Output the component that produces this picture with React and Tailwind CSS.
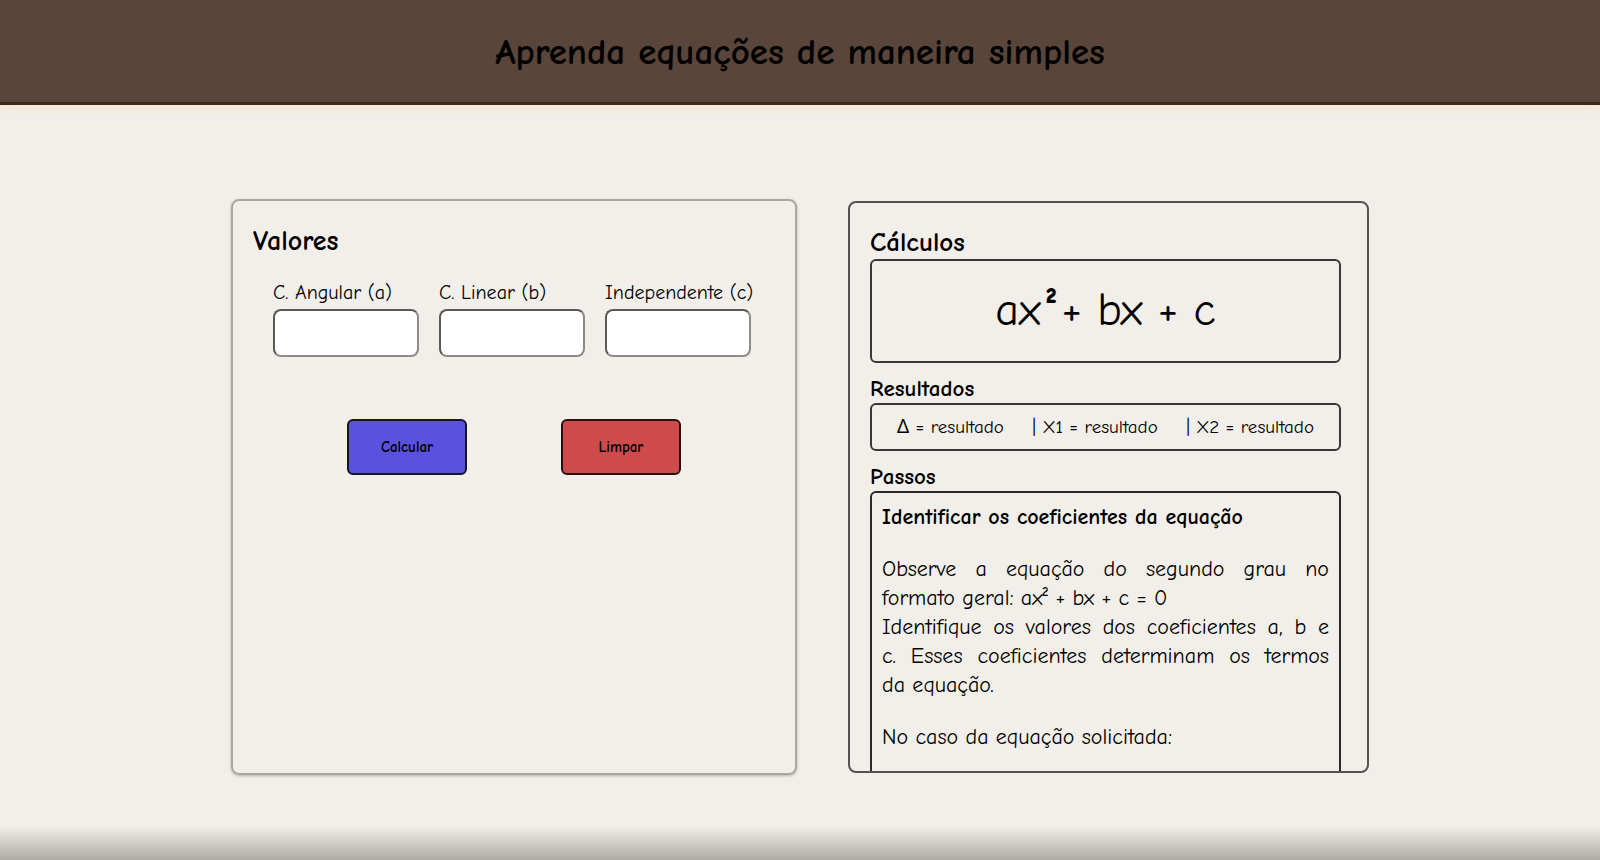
import { useState } from "react";

const FIELDS = [
  { id: "a", label: "C. Angular (a)" },
  { id: "b", label: "C. Linear (b)" },
  { id: "c", label: "Independente (c)" },
];

const EMPTY = { a: "", b: "", c: "" };

function solve({ a, b, c }) {
  const [x, y, z] = [a, b, c].map(Number);
  if (!x) return null;
  const delta = y * y - 4 * x * z;
  if (delta < 0) return { delta, x1: "∄", x2: "∄" };
  const root = Math.sqrt(delta);
  return { delta, x1: (-y + root) / (2 * x), x2: (-y - root) / (2 * x) };
}

function ValuesCard({ onSolve }) {
  const [values, setValues] = useState(EMPTY);
  return (
    <section className="min-w-0 rounded-lg border-2 border-[#aaa7a2] px-5 pt-5 shadow-[0_1px_3px_rgba(0,0,0,0.25)]">
      <h2 className="text-[28px] leading-10 font-bold">Valores</h2>
      <form
        onSubmit={(e) => {
          e.preventDefault();
          onSolve(solve(values));
        }}
      >
        <div className="mt-4 flex gap-5 pr-6 pl-5">
          {FIELDS.map((f) => (
            <div key={f.id} className="flex min-w-0 flex-1 flex-col">
              <label htmlFor={f.id} className="text-[20px] leading-8 whitespace-nowrap">
                {f.label}
              </label>
              <input
                id={f.id}
                type="text"
                value={values[f.id]}
                onChange={(e) => setValues({ ...values, [f.id]: e.target.value })}
                className="h-12 w-full rounded-lg border-2 border-t-[#5b5955] border-r-[#8d8b88] border-b-[#8d8b88] border-l-[#5b5955] bg-white px-3 text-[20px]"
              />
            </div>
          ))}
        </div>
        <div className="mt-[62px] flex justify-center gap-[94px]">
          <button
            type="submit"
            className="h-14 w-[120px] rounded-md border-2 border-[#15132f] bg-[#5852df] text-[15px] font-bold"
          >
            Calcular
          </button>
          <button
            type="button"
            onClick={() => {
              setValues(EMPTY);
              onSolve(null);
            }}
            className="h-14 w-[120px] rounded-md border-2 border-[#2b0f0f] bg-[#cf4b4b] text-[15px] font-bold"
          >
            Limpar
          </button>
        </div>
      </form>
    </section>
  );
}

function ResultsCard({ result }) {
  const { delta = "resultado", x1 = "resultado", x2 = "resultado" } = result ?? {};
  return (
    <section className="my-[2px] min-w-0 overflow-y-auto rounded-lg border-2 border-[#55534f] pt-5 pr-[26px] pl-5 [scrollbar-width:none]">
      <h2 className="pt-1 text-[27px] leading-8 font-bold">Cálculos</h2>
      <div className="flex h-[104px] items-center justify-center rounded-md border-2 border-[#3a3835] text-[46px] leading-none">
        <p>
          ax<span className="mx-[5px] align-[8px] text-[36px] leading-none font-bold">²</span>+ bx + c
        </p>
      </div>
      <h3 className="mt-3 text-[23px] leading-7 font-bold">Resultados</h3>
      <div className="flex h-12 items-center justify-between rounded-md border-2 border-[#3a3835] px-[25px] text-[19px]">
        <span>Δ = {delta}</span>
        <span>| X1 = {x1}</span>
        <span>| X2 = {x2}</span>
      </div>
      <h3 className="mt-3 text-[23px] leading-7 font-bold">Passos</h3>
      <div className="flex flex-col gap-[23px] rounded-md border-2 border-[#2c2a28] px-[10px] pt-[10px] pb-6 text-justify text-[22px] leading-[29px]">
        <h4 className="font-bold">Identificar os coeficientes da equação</h4>
        <p>
          Observe a equação do segundo grau no formato geral: ax² + bx + c = 0
          <br />
          Identifique os valores dos coeficientes a, b e c.&nbsp;Esses coeficientes determinam os termos da&nbsp;equação.
        </p>
        <p className="pb-8">No caso da equação solicitada:</p>
      </div>
    </section>
  );
}

export default function App() {
  const [result, setResult] = useState(null);
  return (
    <div className="flex h-screen min-h-[640px] flex-col bg-[#f2efea] font-['Comic_Sans_MS','Comic_Neue','Noto_Sans',sans-serif] text-black">
      <header className="flex h-[105px] shrink-0 items-center justify-center border-b-[3px] border-[#3a291d] bg-[#594539] pt-[2px] shadow-[0_4px_10px_#f7e6cc]">
        <h1 className="text-[37px] leading-none font-bold">Aprenda equações de maneira simples</h1>
      </header>
      <main className="mx-auto grid min-h-0 w-full max-w-[1138px] flex-1 grid-cols-[566fr_521fr] grid-rows-[minmax(0,1fr)] gap-[51px] pt-[94px] pb-[51px]">
        <ValuesCard onSolve={setResult} />
        <ResultsCard result={result} />
      </main>
      <footer className="h-[34px] shrink-0 bg-linear-to-b from-[#f2efea] to-[#aeaaa6]" />
    </div>
  );
}
